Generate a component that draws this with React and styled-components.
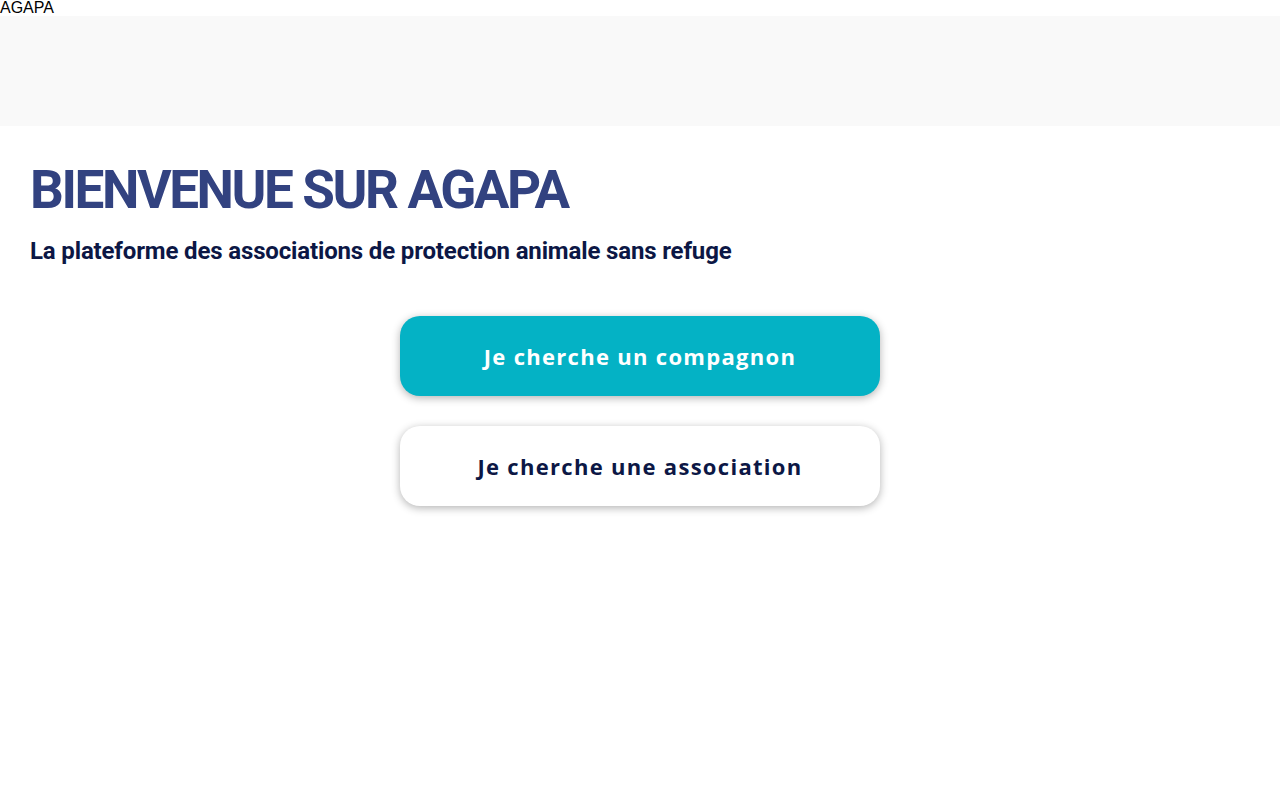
import React from "react";
import styled, { createGlobalStyle } from "styled-components";

const GlobalStyle = createGlobalStyle`
  body {
    margin: 0;
    background: #ffffff;
    font-family: "Liberation Sans", Arial, sans-serif;
  }
`;

const Brand = styled.div`
  font-family: "Liberation Sans", Arial, sans-serif;
  font-size: 16px;
  line-height: 16px;
  color: #000;
`;

const TopBand = styled.header`
  height: 110px;
  background: #f9f9f9;
`;

const Main = styled.main`
  padding: 30px 30px 60px;
`;

const Title = styled.h1`
  margin: 0;
  font-family: Roboto, "Liberation Sans", sans-serif;
  font-weight: 700;
  font-size: 53px;
  line-height: 68px;
  letter-spacing: -2.4px;
  color: #324280;
`;

const Subtitle = styled.h2`
  margin: 11px 0 0;
  font-family: Roboto, "Liberation Sans", sans-serif;
  font-weight: 700;
  font-size: 24px;
  line-height: 32px;
  letter-spacing: -0.15px;
  color: #0c1745;
`;

const Actions = styled.div`
  display: flex;
  flex-direction: column;
  align-items: center;
  gap: 30px;
  margin-top: 49px;
`;

const ActionButton = styled.button`
  width: 480px;
  height: 80px;
  border: none;
  border-radius: 20px;
  background: ${(p) => (p.$primary ? "#04b2c5" : "#ffffff")};
  color: ${(p) => (p.$primary ? "#ffffff" : "#0c1745")};
  box-shadow: 0 2px 8px rgba(0, 0, 0, 0.3);
  font-family: "Open Sans", sans-serif;
  font-weight: 700;
  font-size: 22px;
  letter-spacing: 1.3px;
  cursor: pointer;
`;

export default function App() {
  return (
    <>
      <GlobalStyle />
      <Brand>AGAPA</Brand>
      <TopBand />
      <Main>
        <Title>BIENVENUE SUR AGAPA</Title>
        <Subtitle>La plateforme des associations de protection animale sans refuge</Subtitle>
        <Actions>
          <ActionButton $primary>Je cherche un compagnon</ActionButton>
          <ActionButton>Je cherche une association</ActionButton>
        </Actions>
      </Main>
    </>
  );
}
